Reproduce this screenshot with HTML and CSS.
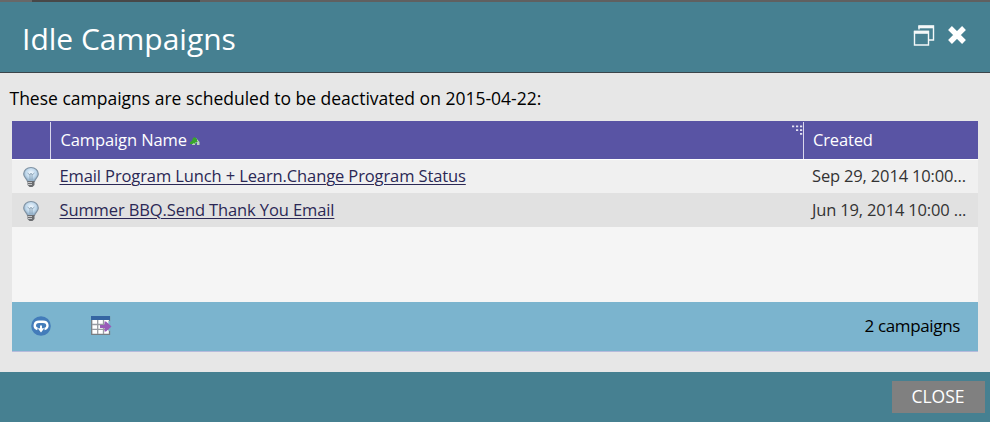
FILE: index.html
```html
<!DOCTYPE html>
<html lang="en">
<head>
<meta charset="utf-8">
<title>Idle Campaigns</title>
<link rel="stylesheet" href="styles.css">
</head>
<body>
<div class="backdrop"></div>
<section class="dialog">
  <header class="titlebar">
    <h1>Idle Campaigns</h1>
    <div class="tools">
      <svg class="restore" width="22" height="22" viewBox="0 0 22 22" fill="none" stroke="#f4f8f9">
        <path d="M6 5.500V2H20.500V16H16" stroke-width="1.400"/>
        <path d="M5.400 3H21" stroke-width="2.600"/>
        <path d="M1.500 7.500H15.500V21H1.500Z" stroke-width="1.400"/>
        <path d="M.9 8.300H16" stroke-width="3"/>
      </svg>
      <svg class="close-icon" width="20" height="20" viewBox="0 0 20 20">
        <path d="M3 3L17 17M17 3L3 17" stroke="#fff" stroke-width="5.400"/>
      </svg>
    </div>
  </header>
  <main>
    <p class="intro">These campaigns are scheduled to be deactivated on 2015-04-22:</p>
    <div class="grid">
      <div class="row head">
        <span class="icon-cell"></span>
        <span class="name">Campaign Name
          <svg class="sort" width="10" height="8" viewBox="0 0 10 8"><path d="M3 4L6 1L9.500 5V8H7V5L5 7V8H2Z" fill="#b9d8bc"/><path d="M0 7V5.500L2.500 3V1.500L4.500 0L7 2V4L8 5H5.500V7.500L4 6L2.500 7Z" fill="#38a52c"/></svg>
          <svg class="grip" width="12" height="12" viewBox="0 0 12 12" fill="#e4e2f2"><path d="M1 1.500h2.200v1.800H1zM5 1.500h2.200v1.800H5zM9 1.500h2.200v1.800H9zM5 5.200h2.200V7H5zM9 5.200h2.200V7H9zM9 9h2.200v1.800H9z"/></svg>
        </span>
        <span class="created">Created</span>
      </div>
      <div class="row first">
        <span class="icon-cell"><svg width="18" height="22" viewBox="0 0 18 22"><defs><radialGradient id="glass" cx=".5" cy=".4" r=".6"><stop offset="0" stop-color="#f4faff"/><stop offset=".55" stop-color="#c2daed"/><stop offset="1" stop-color="#8aa9c4"/></radialGradient></defs><path d="M9 1.500C4.800 1.500 1.700 4.400 1.700 8C1.700 11 4.500 12.400 5.600 15.500H12.400C13.500 12.400 16.300 11 16.300 8C16.300 4.400 13.200 1.500 9 1.500Z" fill="url(#glass)" stroke="#8294a4" stroke-width="1.200"/><path d="M5.500 7L8 9L9 7L10 9L12.500 7M8 9V14M10 9V14" fill="none" stroke="#8199ad" stroke-width=".8"/><path d="M5.500 15H12.500V19L10.500 21H7.500L5.500 19Z" fill="#6b6d70"/><path d="M6 16.500H10M6 18.500H10" stroke="#c5c6c8"/></svg></span>
        <span class="name"><a>Email Program Lunch + Learn.Change Program Status</a></span>
        <span class="created">Sep 29, 2014 10:00...</span>
      </div>
      <div class="row alt">
        <span class="icon-cell"><svg width="18" height="22" viewBox="0 0 18 22"><path d="M9 1.500C4.800 1.500 1.700 4.400 1.700 8C1.700 11 4.500 12.400 5.600 15.500H12.400C13.500 12.400 16.300 11 16.300 8C16.300 4.400 13.200 1.500 9 1.500Z" fill="url(#glass)" stroke="#8294a4" stroke-width="1.200"/><path d="M5.500 7L8 9L9 7L10 9L12.500 7M8 9V14M10 9V14" fill="none" stroke="#8199ad" stroke-width=".8"/><path d="M5.500 15H12.500V19L10.500 21H7.500L5.500 19Z" fill="#6b6d70"/><path d="M6 16.500H10M6 18.500H10" stroke="#c5c6c8"/></svg></span>
        <span class="name"><a>Summer BBQ.Send Thank You Email</a></span>
        <span class="created">Jun 19, 2014 10:00 ...</span>
      </div>
      <div class="empty"></div>
      <div class="status">
        <svg class="refresh" width="20" height="20" viewBox="0 0 20 20"><circle cx="10" cy="10" r="9.800" fill="#437cba"/><path d="M6.500 13C2.300 11.500 3 5.800 8 5.800H12C17.500 5.800 17.800 12.500 13.500 13" fill="none" stroke="#fff" stroke-width="2.400"/><path d="M9 9.500H11V12.300H13.300L10 16.500L6.700 12.300H9Z" fill="#fff"/></svg>
        <svg class="export" width="21" height="19" viewBox="0 0 21 19"><path d="M.7 1H18.500V18.300H.7Z" fill="#fff" stroke="#777d82" stroke-width="1.300"/><path d="M1 8.500H18M1 13.300H18M6.700 4V18M12.500 4V18" stroke="#989da3" stroke-width="1.300"/><path d="M0 0H19V4H0Z" fill="#3565a2"/><path d="M18.500 5V15" stroke="#7bb4ce" stroke-width="2"/><path d="M9 8.900H13.500V5.500H15L20.500 10.400L15 15.500H13.500V12H9Z" fill="#985cb8"/></svg>
        <span class="count">2 campaigns</span>
      </div>
    </div>
  </main>
  <footer><button>CLOSE</button></footer>
</section>
</body>
</html>
```

FILE: styles.css
```css
* { box-sizing: border-box; }
body { margin: 0; width: 990px; height: 422px; overflow: hidden; font: 17px/24px "Open Sans", sans-serif; color: #000; background: #e7e7e7; }
.backdrop { height: 2px; background: linear-gradient(90deg, #686868 32px, #484848 32px, #484848 200px, #606060 200px); }
.dialog { height: 420px; display: flex; flex-direction: column; }
.titlebar { height: 71px; padding: 0 23px 0 22px; display: flex; justify-content: space-between; background: #468091; border-bottom: 1px solid #3b454a; }
h1 { margin: 16px 0 0; font-size: 30px; line-height: 42px; font-weight: 400; color: #fff; }
.tools { display: flex; padding-top: 22px; }
.restore { margin-right: 12px; }
.close-icon { margin-top: 1px; }
main { height: 299px; padding: 13px 12px 0; background: #e7e7e7; }
.intro { margin: 0 0 11px -2.5px; white-space: nowrap; font-size: 17.5px; }
.grid { height: 231px; border-bottom: 1px solid #b6bbdc; }
.row { display: grid; grid-template-columns: 38px 753px 175px; height: 34px; background: #f0f0f0; color: #333; align-items: center; white-space: nowrap; font-size: 16.5px; letter-spacing: -.11px; }
.row.alt { padding-bottom: 1px; background: #e1e1e1; }
.row.first { height: 33px; padding-bottom: 1px; }
.row.head { height: 39px; padding-bottom: 1px; background: #5954a4; border-bottom: 1px solid #fff; color: #fff; }
.icon-cell { display: flex; padding: 2px 0 0 10px; }
.name { padding-left: 9.5px; }
.created { padding-left: 9px; letter-spacing: -.16px; }
.head .name, .head .created { height: 37px; line-height: 35px; margin-top: 1px; border-left: 1px solid #d9d7ec; padding-left: 9.5px; }
.head .created { padding-left: 9px; }
.head .name { position: relative; }
.sort { vertical-align: 1px; margin-left: -1px; }
.grip { position: absolute; top: 2px; right: 0; }
a { color: #2b2855; text-decoration: underline; text-decoration-thickness: 1px; text-underline-offset: 2px; }
.empty { height: 75px; background: #f5f5f5; }
.status { height: 49px; padding: 0 18px 1px 19px; display: flex; align-items: center; background: #7bb4ce; }
.refresh { margin-bottom: 1px; }
.export { margin: 0 0 2px 40px; }
.count { margin-left: auto; letter-spacing: -.35px; }
footer { height: 50px; padding: 9px 5px 0; display: flex; justify-content: flex-end; align-items: flex-start; background: #468091; }
button { width: 93px; height: 32px; padding: 0 1px 1px 0; border: 0; background: #808080; color: #fff; font: 17.5px/31px "Open Sans", sans-serif; }
```
